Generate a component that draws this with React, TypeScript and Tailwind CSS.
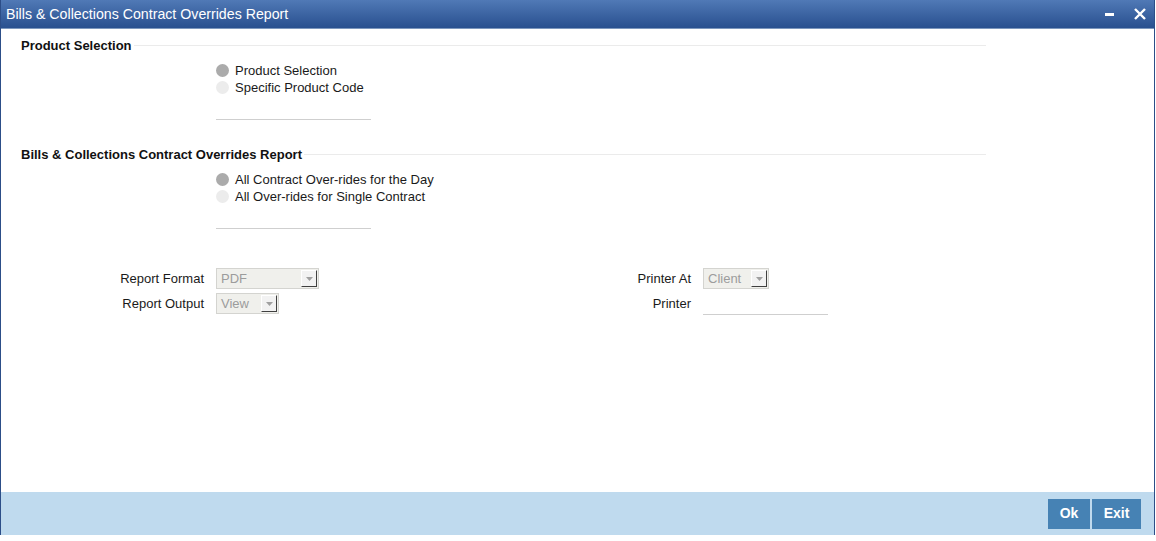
import React from "react";

function Radio({ checked, label }: { checked?: boolean; label: string }) {
  return (
    <div className="flex items-center h-[17px]">
      <span
        className={`inline-block w-[13px] h-[13px] rounded-full ${checked ? "bg-[#ababab]" : "bg-[#ececec]"}`}
      />
      <span className="ml-[6px] text-[13px] text-[#1a1a1a] leading-none">{label}</span>
    </div>
  );
}

function SectionHeader({ title }: { title: string }) {
  return (
    <div className="flex items-center h-[16px] w-[965px] ml-[20px]">
      <span className="text-[13px] font-bold text-[#111] leading-none whitespace-nowrap">{title}</span>
      <span className="flex-1 h-px bg-[#ebebeb] ml-[2px]" />
    </div>
  );
}

function Select({ value, width }: { value: string; width: number }) {
  return (
    <div
      className="h-[21px] bg-[#f0f0ec] border border-[#d4d4d0] flex items-center justify-between pl-[4px] pr-[1px]"
      style={{ width }}
    >
      <span className="text-[13px] text-[#9c9c9c] leading-none">{value}</span>
      <span className="w-[16px] h-[17px] bg-[#f2f2f2] border-t border-l border-t-white border-l-white border-r border-b border-r-[#404040] border-b-[#404040] flex items-center justify-center">
        <svg width="7" height="4" viewBox="0 0 7 4">
          <path d="M0 0 L7 0 L3.5 4 Z" fill="#a0a0a0" />
        </svg>
      </span>
    </div>
  );
}

export default function App() {
  return (
    <div className="w-[1156px] h-[541px] bg-white" style={{ fontFamily: '"Liberation Sans", Arial, sans-serif' }}>
      <div className="w-[1155px] h-[535px] flex flex-col border-l border-r border-[#2c4e88]">
        {/* Title bar */}
        <div className="h-[29px] flex items-center justify-between bg-gradient-to-b from-[#5079b6] to-[#29508f] border-b border-[#7c97bd] pl-[5px] pr-[8px]">
          <span className="text-white text-[14.2px] leading-none">Bills &amp; Collections Contract Overrides Report</span>
          <div className="flex items-center gap-[20px]">
            <span className="w-[9px] h-[3px] bg-white mt-[1px]" />
            <svg width="12" height="12" viewBox="0 0 12 12">
              <path d="M1 1 L11 11 M11 1 L1 11" stroke="white" strokeWidth="2.4" />
            </svg>
          </div>
        </div>

        {/* Content */}
        <div className="flex-1 flex flex-col">
          <div className="mt-[8px]">
            <SectionHeader title="Product Selection" />
          </div>
          <div className="ml-[215px] mt-[9px] flex flex-col">
            <Radio checked label="Product Selection" />
            <Radio label="Specific Product Code" />
          </div>
          <div className="ml-[215px] mt-[23px] w-[155px] h-px bg-[#cfcfcf]" />

          <div className="mt-[26px]">
            <SectionHeader title="Bills & Collections Contract Overrides Report" />
          </div>
          <div className="ml-[215px] mt-[9px] flex flex-col">
            <Radio checked label="All Contract Over-rides for the Day" />
            <Radio label="All Over-rides for Single Contract" />
          </div>
          <div className="ml-[215px] mt-[23px] w-[155px] h-px bg-[#cfcfcf]" />

          <div className="mt-[39px] flex">
            <div className="ml-[98px] w-[500px] flex flex-col gap-[4px]">
              <div className="flex items-center">
                <span className="w-[105px] text-right text-[13px] text-[#1a1a1a]">Report Format</span>
                <span className="ml-[12px]">
                  <Select value="PDF" width={103} />
                </span>
              </div>
              <div className="flex items-center">
                <span className="w-[105px] text-right text-[13px] text-[#1a1a1a]">Report Output</span>
                <span className="ml-[12px]">
                  <Select value="View" width={63} />
                </span>
              </div>
            </div>
            <div className="flex flex-col gap-[4px]">
              <div className="flex items-center">
                <span className="w-[92px] text-right text-[13px] text-[#1a1a1a]">Printer At</span>
                <span className="ml-[12px]">
                  <Select value="Client" width={66} />
                </span>
              </div>
              <div className="flex items-center h-[21px]">
                <span className="w-[92px] text-right text-[13px] text-[#1a1a1a]">Printer</span>
                <span className="ml-[12px] w-[125px] h-[21px] border-b border-[#cfcfcf] mt-[2px]" />
              </div>
            </div>
          </div>
        </div>

        {/* Footer */}
        <div className="h-[43px] bg-[#bfdaee] flex items-center justify-end pr-[13px] gap-[2px]">
          <button className="w-[42px] h-[30px] bg-[#4682b4] text-white text-[14px] font-bold">Ok</button>
          <button className="w-[49px] h-[30px] bg-[#4682b4] text-white text-[14px] font-bold">Exit</button>
        </div>
      </div>
    </div>
  );
}
